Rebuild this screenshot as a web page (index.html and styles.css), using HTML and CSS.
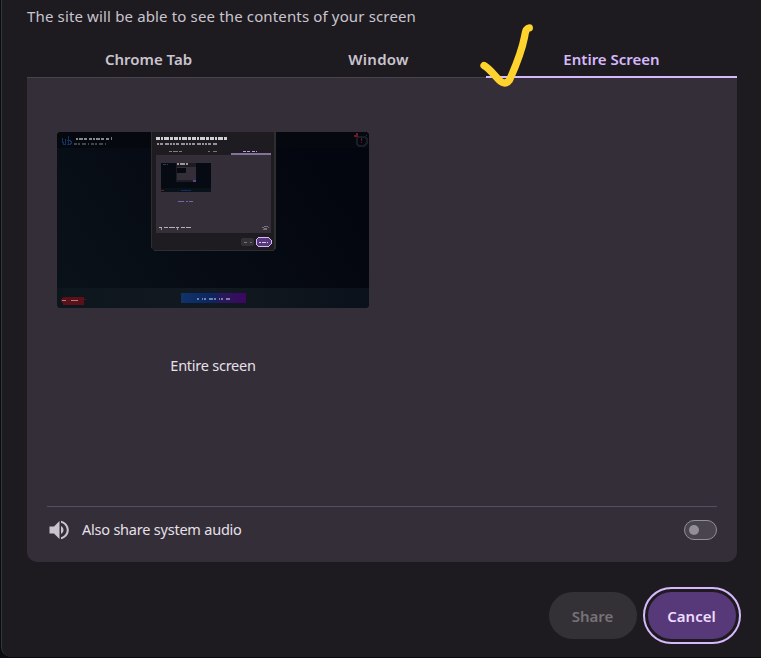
FILE: index.html
```html
<!DOCTYPE html>
<html lang="en">
<head>
<meta charset="utf-8">
<title>Choose what to share</title>
<link rel="stylesheet" href="styles.css">
</head>
<body>
<main class="dialog">
  <p class="subtitle">The site will be able to see the contents of your screen</p>
  <nav class="tabs">
    <div class="tab tab-chrome">Chrome Tab</div>
    <div class="tab tab-window">Window</div>
    <div class="tab tab-screen">Entire Screen</div>
    <svg class="tick" width="64" height="76" viewBox="475 18 64 76"><path d="M484 65.500C490 69 494 75 499 80Q505 86 509.500 80C514 70 522 50 524.500 37Q525.500 28 529.300 27.800" /></svg>
  </nav>
  <section class="panel">
    <figure class="source">
      <svg class="thumb" width="312" height="176" viewBox="57 132 312 176" shape-rendering="crispEdges">
        <defs>
          <linearGradient id="bg" x1="0" y1="1" x2="1" y2=".6"><stop offset="0" stop-color="#0a1219"/><stop offset=".5" stop-color="#070c14"/><stop offset="1" stop-color="#04060f"/></linearGradient>
          <linearGradient id="bar"><stop offset="0" stop-color="#0e161d"/><stop offset=".5" stop-color="#121920"/><stop offset="1" stop-color="#0a111a"/></linearGradient>
          <linearGradient id="cta"><stop offset="0" stop-color="#103368"/><stop offset=".5" stop-color="#0b2564"/><stop offset=".62" stop-color="#29185c"/><stop offset="1" stop-color="#3b0761"/></linearGradient>
        </defs>
        <path fill="url(#bg)" d="M57 132h312v176H57z"/>
        <path fill="#05080f" d="M57 132h312v16H57z"/>
        <path fill="url(#bar)" d="M57 288h312v20H57z"/>
        <path fill="none" stroke="#12335f" d="M62.500 138v3l1 3h2v-5M68.500 136v8M67 140.500h3l1 1v2l-1 1h-3"/>
        <path stroke="#858987" stroke-width="2" stroke-dasharray="2 1 4 1 3 2 3 1" d="M76 139h33"/><path stroke="#777b7d" stroke-width="3" d="M111 138.500h1"/>
        <path stroke="#3b484c" stroke-dasharray="3 1 2 2 4 2 1 2" stroke-width="2" d="M74 143.500h32"/>
        <path fill="none" stroke="#181e28" stroke-width="2" d="M358.500 136.500h6l2 2v5l-2 2h-6l-2-2v-5z"/>
        <path stroke="#6a1725" stroke-width="1" d="M361.500 138v3M361.500 142v1"/><path stroke="#16382d" d="M366 135.500h1"/>
        <path fill="none" stroke="#741827" stroke-width="2" d="M354 136h4M357 133v4"/>
        <path fill="#2b302f" d="M151 132h125v116l-2 3H154l-3-3z"/>
        <path fill="#1e1c20" d="M152 132h122v117l-1 1H153l-1-1z"/>
        <path stroke="#cfd0d4" stroke-width="3" stroke-dasharray="4 1 2 1 5 1 3 1" d="M156 138.500h71"/>
        <path stroke="#94949a" stroke-width="2" stroke-dasharray="2 1 3 2 4 1 2 1" d="M157 144h61"/>
        <path stroke="#827b84" stroke-dasharray="3 1 5 1" d="M169 151.500h13"/><path stroke="#77757d" stroke-dasharray="2 3 4 1" d="M208 151.500h10"/><path stroke="#b2a1e0" stroke-dasharray="3 1 3 2" d="M243 151.500h14"/>
        <path fill="#342e39" d="M156 155h115v78H156z"/>
        <path fill="#86719c" d="M231 153h40v2h-40z"/>
        <path fill="#060a12" d="M161 163h50v29h-50z"/>
        <path fill="#091219" d="M161 188h50v4h-50z"/>
        <path fill="#1e1c20" d="M176 163h20v19h-20z"/><path fill="#342e39" d="M177 167h19v13h-19z"/><path fill="#060a12" d="M177 168h9v5h-9z"/>
        <path stroke="#99999d" stroke-width="2" stroke-dasharray="2 1 5 1" d="M177 164h12"/><path stroke="#263d5b" stroke-dasharray="3 1" d="M163 164.500h5"/><path stroke="#122d63" d="M181 190.500h10"/><path stroke="#68201f" d="M161 190.500h3"/><path fill="#654285" d="M193 180h3v2h-3z"/>
        <path stroke="#7166a8" stroke-dasharray="6 2 2 1" d="M178 201.500h15"/>
        <path stroke="#b5afba" stroke-dasharray="3 2 4 1 6 1" d="M159 227.500h32"/><path fill="#9a949e" d="M161 228h1v2h-1zM177 228h1v2h-1z"/>
        <path stroke="#77717c" d="M264 226.500h4M262 227.500h2M268 227.500h1M264 228.500h3M263 229.500h4"/>
        <path fill="#343136" d="M242 238h11l1 2v4l-1 2h-11l-1-2v-4z"/><path stroke="#77737b" stroke-dasharray="3 3 2 1" d="M244 242.500h8"/>
        <path fill="#57397b" stroke="#d6b9fa" d="M258.500 237.500h10l3 3v3l-3 3h-10l-2-2v-5z"/><path stroke="#dacbed" stroke-dasharray="2 1 4 1" d="M259 242.500h9"/>
        <rect x="181" y="293" width="65" height="10" rx="1" fill="url(#cta)"/>
        <path stroke="#77829a" stroke-width="2" stroke-dasharray="2 3 1 1 2 3 4 1" d="M197 298.500h33"/>
        <path fill="#5b1117" d="M63 297h21v2h2v1h-2v5H63v-2l-2-1v-3z"/>
        <path stroke="#a68386" stroke-dasharray="4 5 7 9" d="M62 300.500h16"/>
      </svg>
      <figcaption>Entire screen</figcaption>
    </figure>
    <footer class="audio">
      <svg class="speaker" width="24" height="24" viewBox="0 0 24 24"><path fill="#cac4cf" d="M2.500 8.500v7H7l5.500 5.500V3L7 8.500zM14 8v8c1.500-.8 2.500-2.300 2.500-4S15.500 8.800 14 8zM14 2.700v2.100c3.300.9 5.700 3.800 5.700 7.200s-2.400 6.300-5.700 7.200v2.100c4.500-1 7.800-4.800 7.800-9.300S18.500 3.700 14 2.700z"/></svg>
      <span class="audio-label">Also share system audio</span>
      <span class="switch"></span>
    </footer>
  </section>
  <div class="actions">
    <button class="btn share" disabled>Share</button>
    <button class="btn cancel">Cancel</button>
  </div>
</main>
</body>
</html>
```
FILE: styles.css
```css
* { box-sizing: border-box; }
body {
  margin: 0;
  height: 658px;
  overflow: hidden;
  background: #080b10;
  font-family: "Noto Sans", "Open Sans", sans-serif;
  font-size: 15px;
  color: #e7e0e8;
}
.dialog {
  height: 657px;
  margin: 0 0 0 1px;
  padding: 0 23px 0 25px;
  background: #1e1b20;
  border-left: 1px solid #353638;
  border-radius: 0 0 0 10px;
}
.subtitle {
  margin: 0;
  height: 41px;
  padding-top: 4px;
  line-height: 24px;
  letter-spacing: .145px;
  color: #cac4cf;
  white-space: nowrap;
}
.tabs {
  position: relative;
  display: grid;
  grid-template-columns: 243px 216px 251px;
  height: 37px;
  width: 710px;
}
.tab {
  padding-top: 7px;
  text-align: center;
  line-height: 22px;
  font-weight: 600;
  color: #cac4cf;
  border-bottom: 1px solid #49454d;
}
.tab-window { letter-spacing: .3px; padding-left: 1px; }
.tab-screen { color: #d6b9fc; border-bottom: 2px solid #d6b9fc; }
.tick {
  position: absolute;
  left: 448px;
  top: -23px;
  fill: none;
  stroke: #ffd32e;
  stroke-width: 7.300;
  stroke-linecap: round;
  stroke-linejoin: round;
}
.panel {
  display: flex;
  flex-direction: column;
  justify-content: space-between;
  width: 710px;
  height: 484px;
  padding: 54px 20px 0;
  background: #342e39;
  border-radius: 0 0 10px 10px;
}
.source { margin: 0 0 0 10px; width: 312px; }
.thumb { display: block; border-radius: 4px; }
figcaption {
  margin-top: 45px;
  line-height: 24px;
  font-size: 14.5px;
  letter-spacing: -.25px;
  text-align: center;
}
.audio {
  display: flex;
  align-items: center;
  height: 56px;
  padding-bottom: 9px;
  border-top: 1px solid #564d66;
}
.speaker { margin-right: 11px; }
.audio-label {
  margin-top: -2px;
  font-size: 14.5px;
  letter-spacing: -.22px;
}
.switch {
  display: flex;
  align-items: center;
  width: 33px;
  height: 20px;
  margin-left: auto;
  padding-left: 4px;
  border: 1px solid #948e99;
  border-radius: 10px;
  background: #49454e;
}
.switch::before {
  content: "";
  width: 10px;
  height: 10px;
  border-radius: 50%;
  background: #948e99;
}
.actions {
  display: flex;
  justify-content: flex-end;
  gap: 11px;
  width: 710px;
  padding: 30px 1px 0 0;
}
.btn {
  width: 88px;
  height: 47px;
  padding: 1px 1px 1px 0;
  border: 0;
  border-radius: 24px;
  font: 600 15px "Noto Sans", "Open Sans", sans-serif;
}
.share { background: #343136; color: #777279; }
.cancel { background: #573979; color: #eddcff; outline: 2px solid #d6b9fc; outline-offset: 3px; }
```
